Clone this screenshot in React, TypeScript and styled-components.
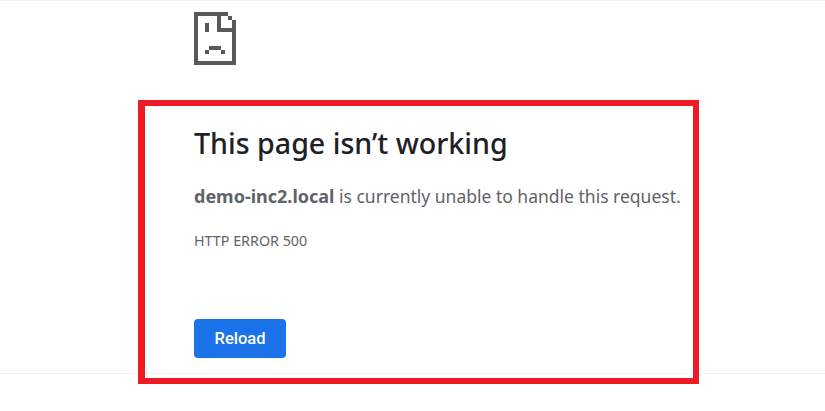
import React from 'react';
import styled, { createGlobalStyle } from 'styled-components';

const GlobalStyle = createGlobalStyle`
  html, body {
    margin: 0;
    padding: 0;
    background: #ffffff;
  }
`;

const Page = styled.div`
  height: 411px;
  box-sizing: border-box;
  border-top: 1px solid #f4f4f4;
  background: linear-gradient(#f1f1f1, #f1f1f1) 0 372px / 100% 1px no-repeat;
  font-family: 'Noto Sans', 'Open Sans', sans-serif;
  overflow: hidden;
`;

const IconRow = styled.div`
  height: 99px;
  padding: 11px 0 0 194px;
  box-sizing: border-box;
`;

const Highlight = styled.section`
  width: 561px;
  height: 284px;
  margin-left: 138px;
  padding: 19px 0 0 49px;
  box-sizing: border-box;
  border: 6px solid #ed1c24;
  border-left-width: 7px;
`;

const Title = styled.h1`
  margin: 0;
  font-size: 28.6px;
  line-height: 36px;
  font-weight: 500;
  color: #202124;
`;

const Message = styled.p`
  margin: 23px 0 0;
  font-size: 17.5px;
  line-height: 24px;
  color: #5f6368;
  white-space: nowrap;

  strong {
    font-size: 18px;
    font-weight: 700;
  }
`;

const ErrorCode = styled.div`
  margin-top: 24px;
  font-size: 14.3px;
  line-height: 18px;
  color: #5f6368;
`;

const ReloadButton = styled.button`
  display: block;
  width: 92px;
  height: 39px;
  margin-top: 69px;
  padding: 0;
  border: none;
  border-radius: 4px;
  background: #1a73e8;
  color: #ffffff;
  font-family: Roboto, sans-serif;
  font-size: 16.5px;
  font-weight: 500;
`;

const SadPageIcon = () => (
  <svg width="42" height="53" viewBox="0 0 42 53" fill="#585858" aria-hidden="true">
    <path d="M0 0h34v4H4v45h34V8h4v45H0z" />
    <path d="M23 4h4v12h11v4H23z" />
    <rect x="34" y="4" width="4" height="4" />
    <rect x="11" y="11" width="4" height="9" />
    <rect x="15" y="34" width="12" height="4" />
    <rect x="11" y="38" width="4" height="4" />
    <rect x="27" y="38" width="4" height="4" />
  </svg>
);

export default function App() {
  return (
    <>
      <GlobalStyle />
      <Page>
        <IconRow>
          <SadPageIcon />
        </IconRow>
        <Highlight>
          <Title>This page isn’t working</Title>
          <Message>
            <strong>demo-inc2.local</strong> is currently unable to handle this request.
          </Message>
          <ErrorCode>HTTP ERROR 500</ErrorCode>
          <ReloadButton>Reload</ReloadButton>
        </Highlight>
      </Page>
    </>
  );
}
